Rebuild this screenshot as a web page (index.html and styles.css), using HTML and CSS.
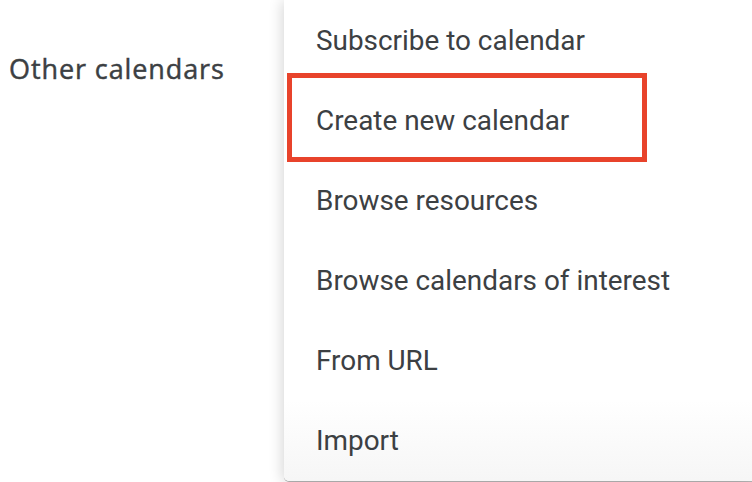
FILE: index.html
```html
<!DOCTYPE html>
<html>
<head>
<meta charset="utf-8">
<link rel="stylesheet" href="styles.css">
</head>
<body>
<div class="page">
  <aside class="sidebar">
    <h2 class="section-title">Other calendars</h2>
  </aside>
  <ul class="menu">
    <li class="menu-item">Subscribe to calendar</li>
    <li class="menu-item highlighted">Create new calendar</li>
    <li class="menu-item">Browse resources</li>
    <li class="menu-item">Browse calendars of interest</li>
    <li class="menu-item">From URL</li>
    <li class="menu-item">Import</li>
  </ul>
</div>
</body>
</html>
```
FILE: styles.css
```css
html, body {
  margin: 0;
  padding: 0;
  background: #ffffff;
  overflow: hidden;
}
.page {
  display: flex;
  width: 752px;
  height: 482px;
}
.sidebar {
  width: 284px;
  flex: none;
}
.section-title {
  margin: 0;
  padding: 51px 0 0 9px;
  font-family: "Open Sans", sans-serif;
  font-weight: 500;
  font-size: 27px;
  letter-spacing: 0.9px;
  line-height: 36px;
  color: #3c4043;
  -webkit-text-stroke: 0.45px #3c4043;
}
.menu {
  list-style: none;
  margin: 0;
  padding: 0;
  flex: 1;
  height: 481px;
  background: linear-gradient(to bottom, #ffffff 0, #ffffff 400px, #f6f6f6 480px);
  border-radius: 0 0 0 5px;
  box-shadow: -2px 1px 14px rgba(0, 0, 0, 0.16), 0 1px 0 #b8b8b8;
  font-family: Roboto, "Liberation Sans", sans-serif;
  font-size: 27.9px;
  color: #3c4043;
}
.menu-item {
  position: relative;
  height: 80px;
  padding-left: 32px;
  display: flex;
  align-items: center;
}
.highlighted::after {
  content: "";
  position: absolute;
  left: 3px;
  top: -7px;
  width: 350px;
  height: 79px;
  border: 5px solid #e8432b;
}
```
